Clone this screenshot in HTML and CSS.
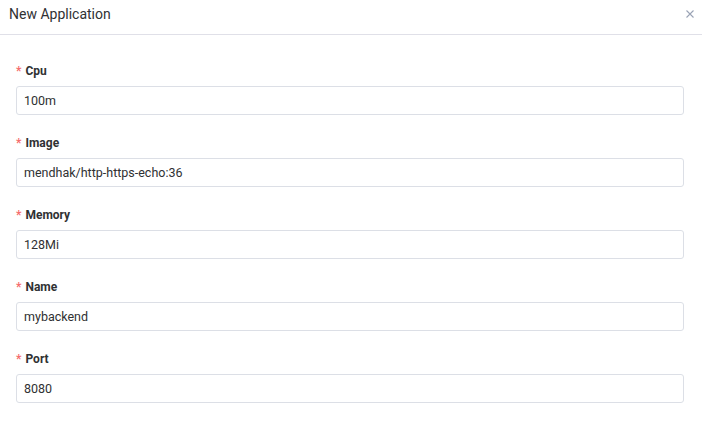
FILE: index.html
```html
<!DOCTYPE html>
<html>
<head>
<meta charset="utf-8">
<link rel="stylesheet" href="styles.css">
</head>
<body>
<div class="dialog">
  <div class="header">
    <span class="title">New Application</span>
    <button class="close" aria-label="Close">
      <svg width="8" height="8" viewBox="0 0 8 8"><path d="M0.5 0.5L7.5 7.5M7.5 0.5L0.5 7.5" stroke="#9aa3b5" stroke-width="1.1" fill="none"/></svg>
    </button>
  </div>
  <form class="body">
    <div class="item">
      <label class="label"><span class="req">*</span>Cpu</label>
      <input class="input" type="text" value="100m">
    </div>
    <div class="item">
      <label class="label"><span class="req">*</span>Image</label>
      <input class="input" type="text" value="mendhak/http-https-echo:36">
    </div>
    <div class="item">
      <label class="label"><span class="req">*</span>Memory</label>
      <input class="input" type="text" value="128Mi">
    </div>
    <div class="item">
      <label class="label"><span class="req">*</span>Name</label>
      <input class="input" type="text" value="mybackend">
    </div>
    <div class="item">
      <label class="label"><span class="req">*</span>Port</label>
      <input class="input" type="text" value="8080">
    </div>
  </form>
</div>
</body>
</html>
```
FILE: styles.css
```css
* { box-sizing: border-box; }
html, body { margin: 0; padding: 0; background: #fff; }
body { font-family: Roboto, "Liberation Sans", sans-serif; color: #303133; }
.dialog { width: 702px; }
.header {
  height: 35px;
  border-bottom: 1px solid #e0e0e8;
  display: flex;
  align-items: center;
  justify-content: space-between;
  padding: 0 9px 6px 9px;
}
.title { font-size: 14px; color: #303133; }
.close {
  border: 0; background: none; padding: 0; margin-right: -1px;
  display: flex; cursor: pointer;
}
.body { padding: 26px 18px 0 16px; display: flex; flex-direction: column; }
.item { display: flex; flex-direction: column; margin-bottom: 18px; }
.label {
  font-size: 12px; font-weight: 700; line-height: 20px; color: #303133;
  margin-bottom: 5px;
}
.req { color: #f56c6c; margin-right: 4px; font-weight: 700; }
.input {
  height: 29px;
  border: 1px solid #dcdfe6;
  border-radius: 3px;
  padding: 0 7px;
  font-family: Roboto, "Liberation Sans", sans-serif;
  font-size: 12.5px;
  color: #303133;
  outline: none;
}
```
